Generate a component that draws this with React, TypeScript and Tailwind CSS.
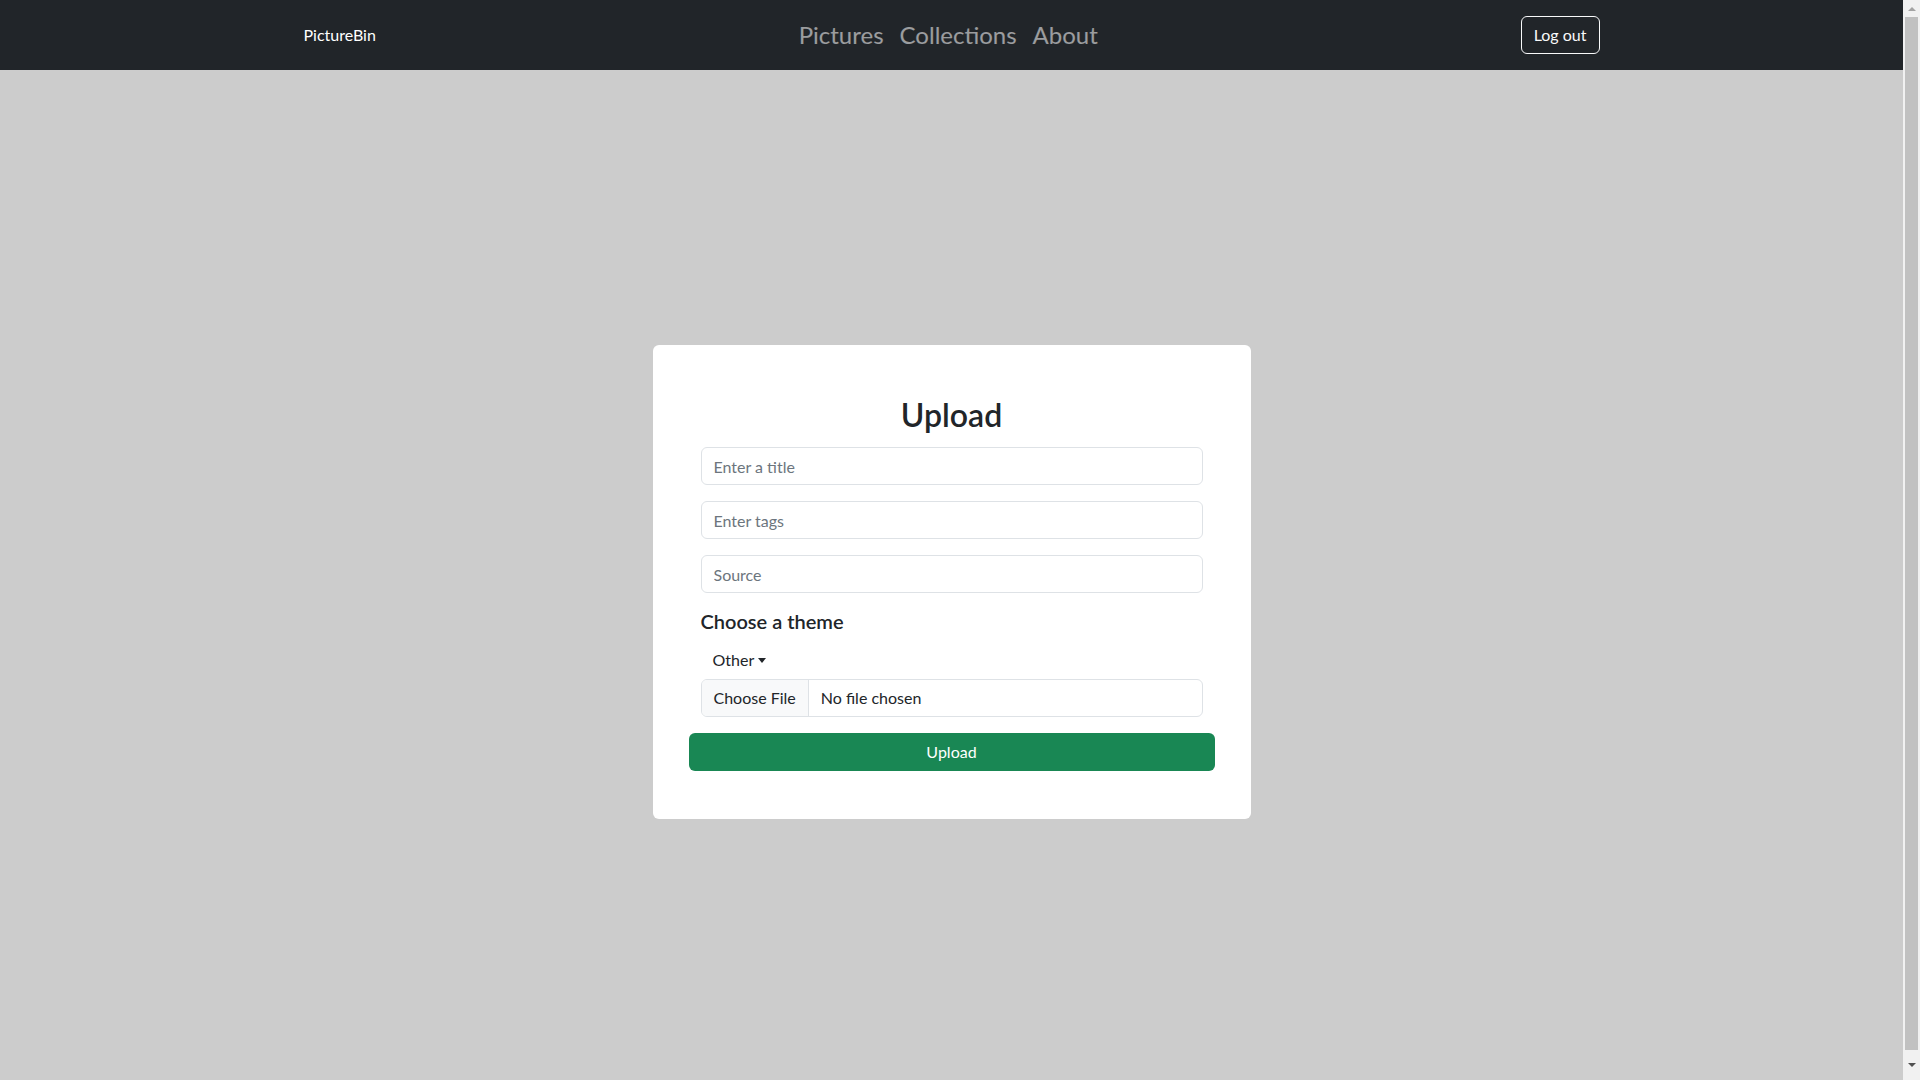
import { useState } from 'react';

const themes = ['Nature', 'Animals', 'Cities', 'Art', 'Other'];

function Navbar() {
  return (
    <nav className="h-[70px] bg-[#212529]">
      <div className="mx-auto flex h-full w-[1320px] items-center justify-between px-3">
        <a href="#" className="text-base leading-6 text-white">
          PictureBin
        </a>
        <ul className="flex items-center">
          {['Pictures', 'Collections', 'About'].map((link) => (
            <li key={link}>
              <a href="#" className="block px-2 text-2xl leading-9 text-white/55 hover:text-white/75">
                {link}
              </a>
            </li>
          ))}
        </ul>
        <button className="h-[38px] rounded-[6px] border border-[#f8f9fa] px-3 text-base text-[#f8f9fa] hover:bg-[#f8f9fa] hover:text-black">
          Log out
        </button>
      </div>
    </nav>
  );
}

function TextInput({ placeholder }: { placeholder: string }) {
  return (
    <input
      type="text"
      placeholder={placeholder}
      className="mb-4 block h-[38px] w-full rounded-[6px] border border-[#dee2e6] bg-white px-3 text-base text-[#212529] outline-none placeholder:text-[#6c757d] focus:border-[#86b7fe]"
    />
  );
}

// window scrollbar, as the browser drew it
function Scrollbar() {
  return (
    <div className="flex w-[17px] shrink-0 flex-col items-center bg-[#f1f1f1]">
      <div className="flex h-[17px] items-center justify-center">
        <span className="h-0 w-0 border-x-[4px] border-b-[4px] border-x-transparent border-b-[#a3a3a3]" />
      </div>
      <div className="w-[13px] flex-1 bg-[#c1c1c1]" />
      <div className="flex h-[30px] items-center justify-center">
        <span className="h-0 w-0 border-x-[4px] border-t-[4px] border-x-transparent border-t-[#505050]" />
      </div>
    </div>
  );
}

export default function App() {
  const [theme, setTheme] = useState('Other');
  const [open, setOpen] = useState(false);

  return (
    <div className="flex h-screen overflow-hidden font-['Lato','Noto_Sans',sans-serif] text-[#212529]">
      <div className="min-w-0 flex-1 bg-[#cccccc]">
        <Navbar />

        <main className="flex h-[1024px] items-center justify-center">
          <div className="w-[598px] rounded-[6px] bg-white p-12">
            <h2 className="mb-[13px] pt-[3px] text-center text-[32px] leading-[38px] font-semibold">Upload</h2>

            <TextInput placeholder="Enter a title" />
            <TextInput placeholder="Enter tags" />
            <TextInput placeholder="Source" />

            <h5 className="mb-2 text-xl leading-6 font-semibold">Choose a theme</h5>

            <div className="relative">
              <button
                onClick={() => setOpen(!open)}
                className="flex h-[38px] items-center px-3 text-base text-[#212529]"
              >
                {theme}
                <span className="ml-1 inline-block h-0 w-0 border-x-[4px] border-t-[5px] border-x-transparent border-t-[#212529]" />
              </button>
              {open && (
                <ul className="absolute top-[38px] left-0 z-10 w-40 rounded-[6px] border border-black/15 bg-white py-2 shadow">
                  {themes.map((t) => (
                    <li key={t}>
                      <button
                        onClick={() => {
                          setTheme(t);
                          setOpen(false);
                        }}
                        className="block w-full px-4 py-1 text-left hover:bg-[#e9ecef]"
                      >
                        {t}
                      </button>
                    </li>
                  ))}
                </ul>
              )}
            </div>

            <label className="mb-4 flex h-[38px] w-full cursor-pointer overflow-hidden rounded-[6px] border border-[#dee2e6] text-base">
              <span className="flex items-center border-r border-[#dee2e6] bg-[#f8f9fa] px-3">Choose File</span>
              <span className="flex items-center px-3">No file chosen</span>
              <input type="file" className="hidden" />
            </label>

            <div className="-mx-3">
              <button className="h-[38px] w-full rounded-[6px] bg-[#198754] text-base text-white hover:bg-[#157347]">
                Upload
              </button>
            </div>
          </div>
        </main>
      </div>
      <Scrollbar />
    </div>
  );
}
